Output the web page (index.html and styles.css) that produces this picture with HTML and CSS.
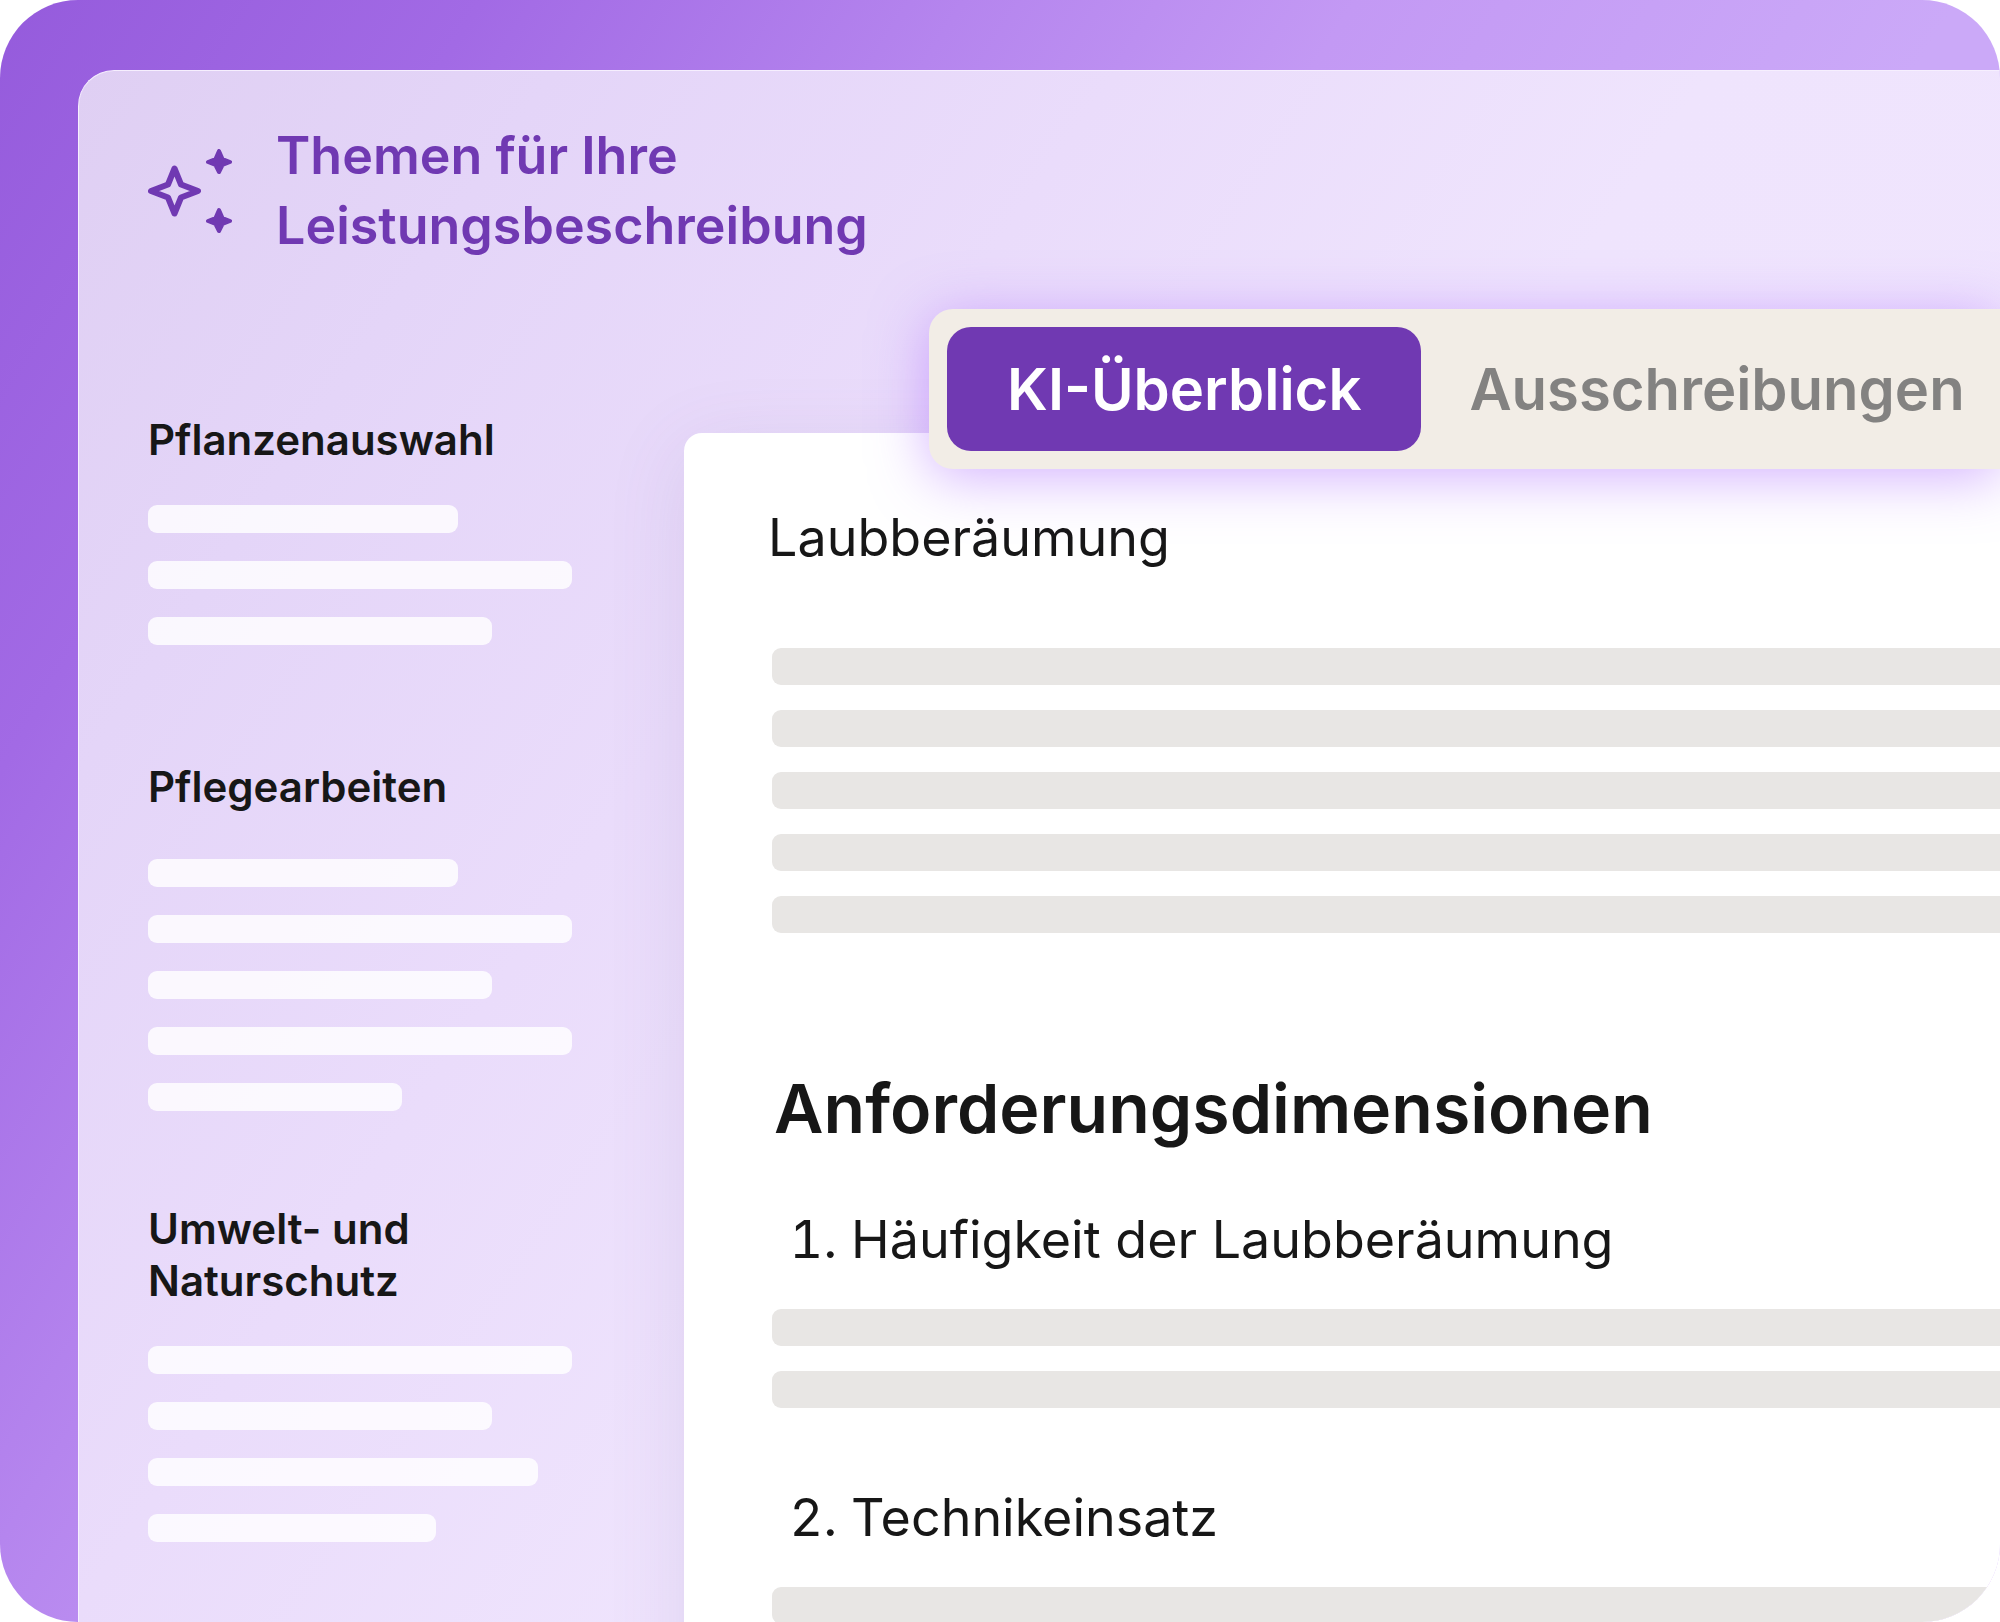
FILE: index.html
```html
<!DOCTYPE html>

<html lang="de">
    <head>
        <title>Themen für Ihre Leistungsbeschreibung</title>
        <meta charset="utf-8" />
        <meta name="viewport" content="width=device-width, initial-scale=1">
        <link rel="stylesheet" href="styles.css">
    </head>

    <body>
        <div class="stage">
            <div class="panel">
                <header class="panel-header">
                    <svg class="sparkles" viewBox="0 0 84 84" aria-hidden="true">
                        <path class="star-outline" d="M26.500 19.500 L33 35.500 L50 42 L33 48.500 L26.500 64.500 L20 48.500 L3 42 L20 35.500 Z" />
                        <path class="star" d="M71 2 L74.500 10 L82 13 L74.500 16 L71 23 L67.500 16 L60 13 L67.500 10 Z" />
                        <path class="star" d="M71 61 L74.500 69 L82 72 L74.500 75 L71 82 L67.500 75 L60 72 L67.500 69 Z" />
                    </svg>
                    <h1>Themen für Ihre<br />Leistungsbeschreibung</h1>
                </header>

                <div class="columns">
                    <!-- Topics -->
                    <aside class="sidebar">
                        <section class="topic">
                            <h2>Pflanzenauswahl</h2>
                            <div class="lines">
                                <span class="line medium"></span>
                                <span class="line full"></span>
                                <span class="line long"></span>
                            </div>
                        </section>
                        <section class="topic topic-care">
                            <h2>Pflegearbeiten</h2>
                            <div class="lines">
                                <span class="line medium"></span>
                                <span class="line full"></span>
                                <span class="line long"></span>
                                <span class="line full"></span>
                                <span class="line short"></span>
                            </div>
                        </section>
                        <section class="topic">
                            <h2>Umwelt- und<br />Naturschutz</h2>
                            <div class="lines">
                                <span class="line full"></span>
                                <span class="line long"></span>
                                <span class="line longer"></span>
                                <span class="line small"></span>
                            </div>
                        </section>
                    </aside>

                    <!-- Document -->
                    <main class="document">
                        <nav class="tabs">
                            <button type="button" class="tab active">KI-Überblick</button>
                            <button type="button" class="tab">Ausschreibungen</button>
                        </nav>

                        <p class="lead">Laubberäumung</p>
                        <div class="rows">
                            <span class="row"></span>
                            <span class="row"></span>
                            <span class="row"></span>
                            <span class="row"></span>
                            <span class="row"></span>
                        </div>

                        <h2 class="doc-title">Anforderungsdimensionen</h2>
                        <ol class="requirements">
                            <li>Häufigkeit der Laubberäumung
                                <div class="rows">
                                    <span class="row"></span>
                                    <span class="row"></span>
                                </div>
                            </li>
                            <li>Technikeinsatz
                                <div class="rows">
                                    <span class="row"></span>
                                </div>
                            </li>
                        </ol>
                    </main>
                </div>
            </div>
        </div>
    </body>
</html>
```
FILE: styles.css
```css
* {
    box-sizing: border-box;
}

body {
    margin: 0;
    background: #ffffff;
    color: #171717;
    font-family: Inter, "Liberation Sans", sans-serif;
}

h1, h2, p, ol {
    margin: 0;
    padding: 0;
}

.stage {
    display: flex;
    height: 100vh;
    padding: 70px 0 0 78px;
    overflow: hidden;
    border-radius: 78px;
    background: linear-gradient(122deg, #955bdc 0%, #a26ae5 16%, #b585ee 32%, #c399f4 45%, #cba9f8 65%);
}

.panel {
    flex: 1;
    min-width: 0;
    border: 1px solid #f6effe;
    border-width: 1px 0 0 1px;
    border-top-left-radius: 36px;
    background: linear-gradient(124deg, #dfcff3 0%, #e4d5f8 16%, #eadcfb 35%, #efe4fd 55%, #f1e6fe 100%);
}

.panel-header {
    display: flex;
    align-items: center;
    gap: 44px;
    padding: 50px 69px 0;
    color: #7039b2;
}

.panel-header h1 {
    font-size: 52px;
    line-height: 70px;
    font-weight: 600;
}

.sparkles {
    width: 84px;
    height: 84px;
    stroke: currentColor;
    stroke-linejoin: round;
}

.star-outline {
    fill: none;
    stroke-width: 6;
}

.star {
    fill: currentColor;
    stroke-width: 4;
}

.columns {
    display: grid;
    grid-template-columns: 31.5% 1fr;
    padding-top: 153px;
}

/* sidebar */
.sidebar {
    padding: 0 112px 0 69px;
}

.topic {
    margin-bottom: 116px;
}

.topic h2 {
    margin-bottom: 39px;
    font-size: 42px;
    line-height: 52px;
    font-weight: 600;
}

.topic-care {
    margin-bottom: 92px;
}

.topic-care h2 {
    margin-bottom: 46px;
}

.lines {
    display: flex;
    flex-direction: column;
    gap: 28px;
}

.line {
    height: 28px;
    border-radius: 9px;
    background: rgba(255, 255, 255, 0.82);
}

.full { width: 100%; }
.longer { width: 92%; }
.long { width: 81%; }
.medium { width: 73%; }
.small { width: 68%; }
.short { width: 60%; }

/* document */
.document {
    position: relative;
    margin-top: 19px;
    padding: 72px 0 0 84px;
    border-top-left-radius: 18px;
    background: #ffffff;
    box-shadow: 0 16px 80px rgba(110, 80, 150, 0.12);
}

.tabs {
    position: absolute;
    top: -124px;
    left: 245px;
    right: 0;
    display: flex;
    padding: 18px;
    border-radius: 24px 0 0 24px;
    background: #f2ede6;
    box-shadow: 0 8px 56px rgba(168, 100, 255, 0.5);
}

.tab {
    padding: 0 48px;
    border: none;
    border-radius: 24px;
    background: none;
    color: #838281;
    font-family: inherit;
    font-size: 58px;
    line-height: 124px;
    font-weight: 600;
    white-space: nowrap;
    cursor: pointer;
}

.tab.active {
    padding: 0 60px;
    background: #7039b2;
    color: #ffffff;
}

.lead, .requirements {
    font-size: 52px;
    line-height: 66px;
}

.rows {
    display: flex;
    flex-direction: column;
    gap: 25px;
    margin-left: 4px;
}

.row {
    height: 37px;
    border-radius: 9px 0 0 9px;
    background: #e8e6e4;
}

.lead {
    margin-bottom: 77px;
}

.doc-title {
    margin: 135px 0 59px 6px;
    font-size: 68px;
    line-height: 80px;
    font-weight: 600;
}

.requirements {
    padding-left: 83px;
}

.requirements li {
    margin-bottom: 77px;
}

.requirements .rows {
    margin: 36px 0 0 -79px;
}
```
